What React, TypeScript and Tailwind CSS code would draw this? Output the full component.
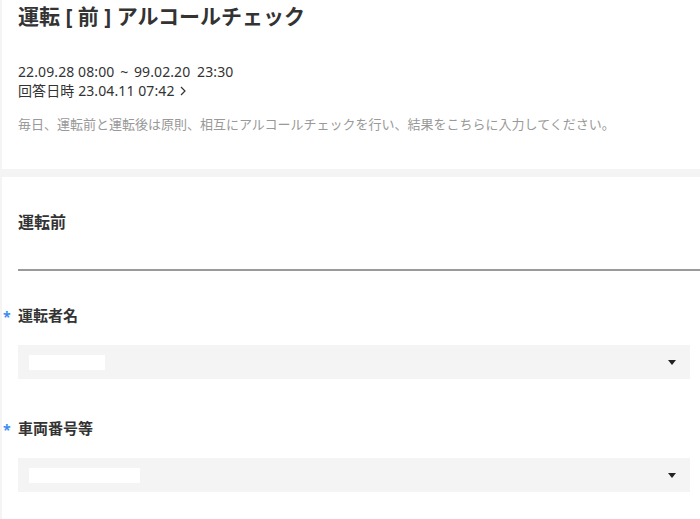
import React from 'react';

const font = { fontFamily: '"Noto Sans", "Noto Sans CJK JP", sans-serif' };

const SelectField: React.FC<{ label: string; placeholderWidth: string }> = ({ label, placeholderWidth }) => (
  <div className="flex flex-col pr-[10px]">
    <div className="relative flex h-[24px] items-center">
      <span className="absolute left-[-15px] top-[3px] text-[14px] font-bold text-[#3b8cf0]">*</span>
      <span className="text-[15px] font-bold leading-none text-[#333]">{label}</span>
    </div>
    <div className="mt-[18px] flex h-[34px] items-center justify-between bg-[#f4f4f4] pl-[11px] pr-[14px]">
      <div className={`h-[15px] bg-white ${placeholderWidth}`} />
      <svg width="8" height="5" viewBox="0 0 8 5">
        <path d="M0 0 H8 L4 5 Z" fill="#222" />
      </svg>
    </div>
  </div>
);

export default function App() {
  return (
    <div className="min-h-[519px] w-[700px] overflow-hidden bg-[#f4f4f4] pl-[2px]" style={font}>
      <div className="flex h-[169px] flex-col bg-white pl-[16px] pt-[2px]">
        <h1 className="text-[21px] font-bold leading-[28px] text-[#333]">運転 [ 前 ] アルコールチェック</h1>
        <div className="mt-[32px] text-[14px] leading-[19px] tracking-[0.1px] text-[#333]">
          <p>
            22.09.28 08:00 <span className="mx-[2px]">~</span> 99.02.20 <span className="ml-[3px]">23:30</span>
          </p>
          <p className="flex items-center gap-[5px]">
            回答日時 23.04.11 07:42
            <svg width="6" height="10" viewBox="0 0 6 10">
              <path d="M1 1 L5 5 L1 9" fill="none" stroke="#333" strokeWidth="1.2" />
            </svg>
          </p>
        </div>
        <p className="mt-[15px] text-[13px] leading-[19px] text-[#999]">
          毎日、運転前と運転後は原則、相互にアルコールチェックを行い、結果をこちらに入力してください。
        </p>
      </div>
      <div className="mt-[8px] flex flex-col bg-white pl-[16px] pt-[33px] pb-[28px]">
        <h2 className="text-[16px] font-bold leading-[24px] text-[#333]">運転前</h2>
        <div className="mt-[35px] h-[2px] bg-[#9a9a9a]" />
        <div className="mt-[32px] flex flex-col gap-[37px]">
          <SelectField label="運転者名" placeholderWidth="w-[76px]" />
          <SelectField label="車両番号等" placeholderWidth="w-[111px]" />
        </div>
      </div>
    </div>
  );
}
